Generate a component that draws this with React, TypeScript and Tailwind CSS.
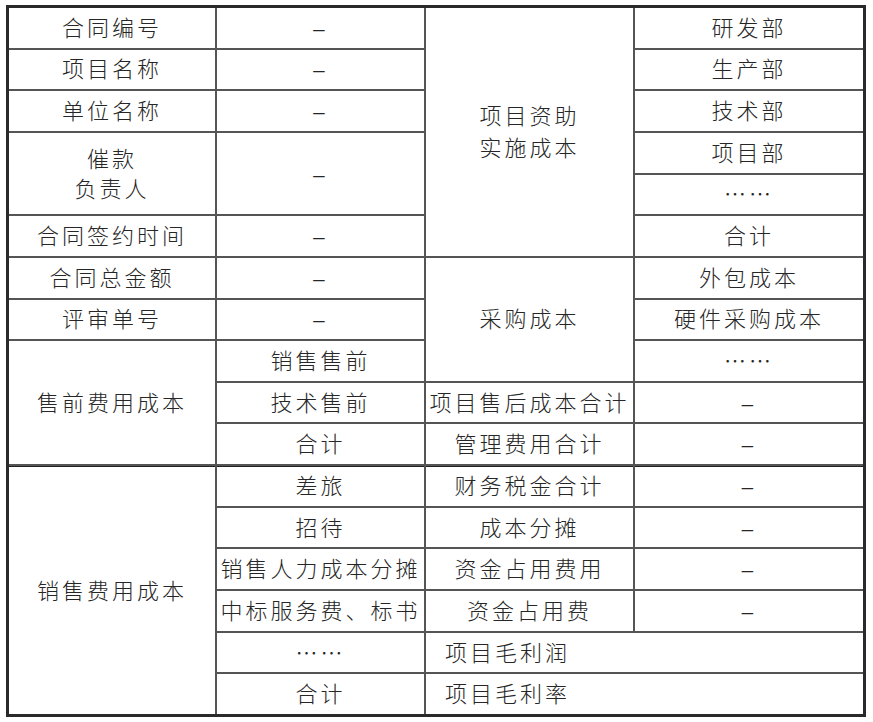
import React from "react";

const cell =
  "bg-white flex items-center justify-center text-center text-[22px] tracking-[3px] text-[#262626] pb-[3px]";
const dash = "text-[26px] tracking-[0px] text-[#333]";
const sep = "border-t-[1px] border-[#222]";

export default function App() {
  return (
    <div className="w-[873px] h-[722px] bg-white font-['Noto_Sans_CJK_SC',sans-serif] font-light">
      <div className="ml-[6px] pt-[5px]">
        <div className="w-[860px] h-[712px] border-[3px] border-[#2a2a2a] bg-[#555] grid grid-cols-[206px_207px_207px_228px] grid-rows-[repeat(17,minmax(0,1fr))] gap-[2px]">
          {/* Column 1 */}
          <div className={`${cell} col-start-1 row-start-1`}>合同编号</div>
          <div className={`${cell} col-start-1 row-start-2`}>项目名称</div>
          <div className={`${cell} col-start-1 row-start-3`}>单位名称</div>
          <div className={`${cell} col-start-1 row-start-4 row-span-2 leading-[30px]`}>
            催款<br />负责人
          </div>
          <div className={`${cell} col-start-1 row-start-6`}>合同签约时间</div>
          <div className={`${cell} col-start-1 row-start-7`}>合同总金额</div>
          <div className={`${cell} col-start-1 row-start-8`}>评审单号</div>
          <div className={`${cell} col-start-1 row-start-9 row-span-3`}>售前费用成本</div>
          <div className={`${cell} ${sep} col-start-1 row-start-12 row-span-6`}>销售费用成本</div>

          {/* Column 2 */}
          <div className={`${cell} ${dash} col-start-2 row-start-1`}>–</div>
          <div className={`${cell} ${dash} col-start-2 row-start-2`}>–</div>
          <div className={`${cell} ${dash} col-start-2 row-start-3`}>–</div>
          <div className={`${cell} ${dash} col-start-2 row-start-4 row-span-2`}>–</div>
          <div className={`${cell} ${dash} col-start-2 row-start-6`}>–</div>
          <div className={`${cell} ${dash} col-start-2 row-start-7`}>–</div>
          <div className={`${cell} ${dash} col-start-2 row-start-8`}>–</div>
          <div className={`${cell} col-start-2 row-start-9`}>销售售前</div>
          <div className={`${cell} col-start-2 row-start-10`}>技术售前</div>
          <div className={`${cell} col-start-2 row-start-11`}>合计</div>
          <div className={`${cell} ${sep} col-start-2 row-start-12`}>差旅</div>
          <div className={`${cell} col-start-2 row-start-13`}>招待</div>
          <div className={`${cell} col-start-2 row-start-14 tracking-[1px]`}>销售人力成本分摊</div>
          <div className={`${cell} col-start-2 row-start-15 tracking-[1px]`}>中标服务费、标书</div>
          <div className={`${cell} col-start-2 row-start-16 tracking-[0px]`}>……</div>
          <div className={`${cell} col-start-2 row-start-17`}>合计</div>

          {/* Column 3 */}
          <div className={`${cell} col-start-3 row-start-1 row-span-6 leading-[32px]`}>
            项目资助<br />实施成本
          </div>
          <div className={`${cell} col-start-3 row-start-7 row-span-3`}>采购成本</div>
          <div className={`${cell} col-start-3 row-start-10 tracking-[1px]`}>项目售后成本合计</div>
          <div className={`${cell} col-start-3 row-start-11`}>管理费用合计</div>
          <div className={`${cell} ${sep} col-start-3 row-start-12`}>财务税金合计</div>
          <div className={`${cell} col-start-3 row-start-13`}>成本分摊</div>
          <div className={`${cell} col-start-3 row-start-14`}>资金占用费用</div>
          <div className={`${cell} col-start-3 row-start-15`}>资金占用费</div>
          <div className={`${cell} col-start-3 col-span-2 row-start-16 !justify-start pl-[19px]`}>项目毛利润</div>
          <div className={`${cell} col-start-3 col-span-2 row-start-17 !justify-start pl-[19px]`}>项目毛利率</div>

          {/* Column 4 */}
          <div className={`${cell} col-start-4 row-start-1`}>研发部</div>
          <div className={`${cell} col-start-4 row-start-2`}>生产部</div>
          <div className={`${cell} col-start-4 row-start-3`}>技术部</div>
          <div className={`${cell} col-start-4 row-start-4`}>项目部</div>
          <div className={`${cell} col-start-4 row-start-5 tracking-[0px]`}>……</div>
          <div className={`${cell} col-start-4 row-start-6`}>合计</div>
          <div className={`${cell} col-start-4 row-start-7`}>外包成本</div>
          <div className={`${cell} col-start-4 row-start-8`}>硬件采购成本</div>
          <div className={`${cell} col-start-4 row-start-9 tracking-[0px]`}>……</div>
          <div className={`${cell} ${dash} col-start-4 row-start-10`}>–</div>
          <div className={`${cell} ${dash} col-start-4 row-start-11`}>–</div>
          <div className={`${cell} ${dash} ${sep} col-start-4 row-start-12`}>–</div>
          <div className={`${cell} ${dash} col-start-4 row-start-13`}>–</div>
          <div className={`${cell} ${dash} col-start-4 row-start-14`}>–</div>
          <div className={`${cell} ${dash} col-start-4 row-start-15`}>–</div>
        </div>
      </div>
    </div>
  );
}
